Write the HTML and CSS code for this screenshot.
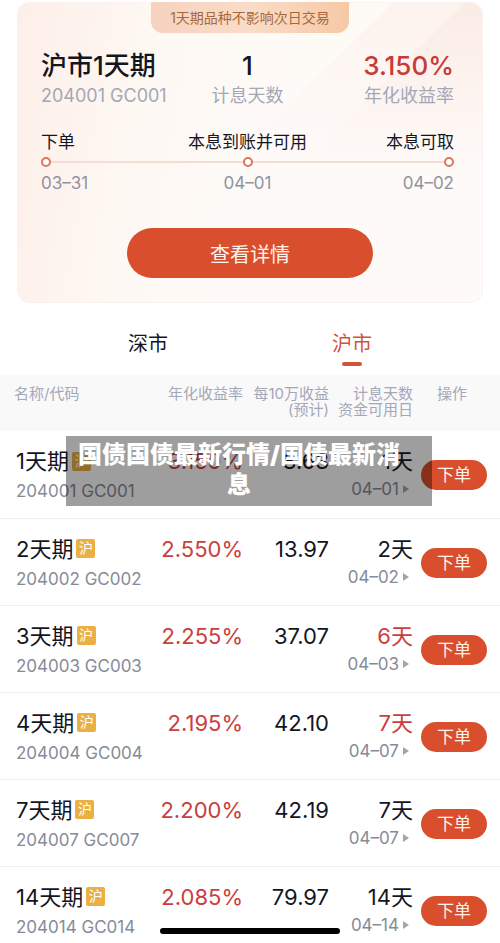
FILE: index.html
```html
<!DOCTYPE html>
<html lang="zh-CN">
<head>
<meta charset="utf-8">
<meta name="viewport" content="width=device-width, initial-scale=1">
<title>国债逆回购</title>
<link rel="stylesheet" href="styles.css">
</head>
<body>
<main class="page">
  <section class="card">
    <p class="card-tag">1天期品种不影响次日交易</p>
    <div class="card-body">
      <div class="summary">
        <div>
          <h1 class="summary-value">沪市1天期</h1>
          <p class="summary-label">204001 GC001</p>
        </div>
        <div class="center">
          <p class="summary-value">1</p>
          <p class="summary-label">计息天数</p>
        </div>
        <div class="right">
          <p class="summary-value accent">3.150%</p>
          <p class="summary-label">年化收益率</p>
        </div>
      </div>
      <div class="steps">
        <span>下单</span><span class="center">本息到账并可用</span><span class="right">本息可取</span>
      </div>
      <div class="track"><i class="dot"></i><i class="bar"></i><i class="dot"></i><i class="bar"></i><i class="dot"></i></div>
      <div class="steps dates">
        <span>03–31</span><span class="center">04–01</span><span class="right">04–02</span>
      </div>
    </div>
    <button class="detail" type="button">查看详情</button>
  </section>

  <nav class="tabs">
    <a class="tab" href="#sz">深市</a>
    <a class="tab active" href="#sh">沪市</a>
  </nav>

  <div class="list">
    <table class="quotes">
      <colgroup><col><col class="col-rate"><col class="col-income"><col class="col-days"><col class="col-action"></colgroup>
      <thead>
        <tr><th class="name">名称/代码</th><th>年化收益率</th><th>每10万收益<br>(预计)</th><th>计息天数<br>资金可用日</th><th class="action">操作</th></tr>
      </thead>
      <tbody>
        <tr>
          <td class="name"><div class="main">1天期<span class="badge">沪</span></div><div class="code">204001 GC001</div></td>
          <td class="main rate">3.150%</td><td class="main">8.63</td>
          <td><div class="main">1天</div><div class="date">04–01<i class="arrow"></i></div></td>
          <td class="action"><button class="order" type="button">下单</button></td>
        </tr>
        <tr>
          <td class="name"><div class="main">2天期<span class="badge">沪</span></div><div class="code">204002 GC002</div></td>
          <td class="main rate">2.550%</td><td class="main">13.97</td>
          <td><div class="main">2天</div><div class="date">04–02<i class="arrow"></i></div></td>
          <td class="action"><button class="order" type="button">下单</button></td>
        </tr>
        <tr>
          <td class="name"><div class="main">3天期<span class="badge">沪</span></div><div class="code">204003 GC003</div></td>
          <td class="main rate">2.255%</td><td class="main">37.07</td>
          <td><div class="main rate">6天</div><div class="date">04–03<i class="arrow"></i></div></td>
          <td class="action"><button class="order" type="button">下单</button></td>
        </tr>
        <tr>
          <td class="name"><div class="main">4天期<span class="badge">沪</span></div><div class="code">204004 GC004</div></td>
          <td class="main rate">2.195%</td><td class="main">42.10</td>
          <td><div class="main rate">7天</div><div class="date">04–07<i class="arrow"></i></div></td>
          <td class="action"><button class="order" type="button">下单</button></td>
        </tr>
        <tr>
          <td class="name"><div class="main">7天期<span class="badge">沪</span></div><div class="code">204007 GC007</div></td>
          <td class="main rate">2.200%</td><td class="main">42.19</td>
          <td><div class="main">7天</div><div class="date">04–07<i class="arrow"></i></div></td>
          <td class="action"><button class="order" type="button">下单</button></td>
        </tr>
        <tr>
          <td class="name"><div class="main">14天期<span class="badge">沪</span></div><div class="code">204014 GC014</div></td>
          <td class="main rate">2.085%</td><td class="main">79.97</td>
          <td><div class="main">14天</div><div class="date">04–14<i class="arrow"></i></div></td>
          <td class="action"><button class="order" type="button">下单</button></td>
        </tr>
      </tbody>
    </table>
    <p class="caption">国债国债最新行情/国债最新消息</p>
  </div>
</main>
<div class="home-indicator"></div>
</body>
</html>
```
FILE: styles.css
```css
* { box-sizing: border-box; }
body {
  margin: 0;
  background: #fff;
  color: #14161f;
  font-family: Inter, "Noto Sans CJK SC", sans-serif;
}
h1, p { margin: 0; }
button { border: 0; padding: 0; font: inherit; cursor: pointer; }
.page { padding-top: 2px; }
.center { text-align: center; }
.right { text-align: right; }

.card {
  display: flex;
  flex-direction: column;
  align-items: center;
  margin: 0 17px;
  padding-bottom: 25px;
  border-radius: 13px;
  background:
    linear-gradient(100deg, #fdeee9 0, rgba(254, 248, 242, .8) 28%, rgba(255, 251, 248, 0) 55%),
    linear-gradient(180deg, rgba(254, 250, 248, 0) 0, #fefaf8 160px),
    linear-gradient(135deg, #fefaf6 265px, #fdf3ee 267px, #fdf3ee 316px, #fbebe5 318px);
  box-shadow: inset 0 0 0 1px #fbf2ef;
}
.card-tag {
  padding: 0 16px;
  min-width: 198px;
  border-radius: 0 0 12px 12px;
  background: linear-gradient(90deg, #f6d2bf, #f9dcc8 50%, #f6c9a5);
  color: #a9683c;
  font-size: 14px;
  line-height: 31px;
  text-align: center;
}
.card-body { width: 100%; padding: 17px 29px 0 24px; }
.summary, .steps { display: grid; grid-template-columns: 1fr auto 1fr; }
.summary-value { font-size: 26px; font-weight: 500; line-height: 32px; }
.summary-label { color: #a3a8b7; font-size: 18px; line-height: 28px; }
.accent { color: #c93a36; }
.steps { margin-top: 20px; font-size: 17px; line-height: 24px; }
.dates { margin-top: 4px; color: #8f93a0; }
.track { display: flex; align-items: center; margin-top: 3px; }
.dot { width: 10px; height: 10px; border: 2px solid #db765a; border-radius: 50%; background: #fff; }
.bar { flex: 1; height: 2px; background: #f7dcd3; }
.detail {
  width: 246px;
  height: 50px;
  margin-top: 33px;
  border-radius: 25px;
  background: #d94e2c;
  color: #fff3ed;
  font-size: 20px;
}

.tabs { display: grid; grid-template-columns: 1fr 1fr; padding: 26px 46px 9px; }
.tab {
  display: flex;
  flex-direction: column;
  align-items: center;
  gap: 3px;
  color: inherit;
  font-size: 20px;
  line-height: 30px;
  text-decoration: none;
}
.tab::after { content: ""; width: 20px; height: 4px; border-radius: 2px; }
.active { color: #cf5537; }
.active::after { background: #cf5537; }

.list { position: relative; }
.quotes { width: 100%; border-collapse: collapse; table-layout: fixed; }
.col-rate { width: 94px; }
.col-income { width: 86px; }
.col-days { width: 84px; }
.col-action { width: 87px; }
th {
  height: 56px;
  padding: 11px 0 0;
  background: #f9f9fa;
  color: #a3a8b7;
  font-size: 15px;
  font-weight: 400;
  line-height: 16px;
  text-align: right;
  vertical-align: top;
  white-space: nowrap;
}
td { height: 87px; padding: 15px 0 0; text-align: right; vertical-align: top; white-space: nowrap; }
tbody tr { border-bottom: 1px solid #eeeeef; }
tbody tr:last-child { border-bottom: 0; }
tbody tr:last-child td { height: 76px; }
th.name { padding-left: 14px; text-align: left; }
td.name { padding-left: 16px; text-align: left; }
th.action { padding-right: 33px; }
td.action { padding: 29px 13px 0 8px; }
.main { font-size: 22px; line-height: 30px; }
.name .main { display: flex; align-items: center; gap: 3px; }
.rate { color: #cb3e3e; }
.code { color: #868b98; font-size: 17px; line-height: 30px; }
.date { display: flex; align-items: center; justify-content: flex-end; gap: 4px; padding-right: 4px; color: #868b98; font-size: 17px; line-height: 26px; }
.arrow { border-left: 6px solid #a0a5b1; border-top: 4px solid transparent; border-bottom: 4px solid transparent; }
.badge { width: 19px; height: 19px; border-radius: 2px; background: #ebb043; color: #fff; font-size: 14px; line-height: 18px; text-align: center; }
.order { display: block; width: 100%; height: 30px; border-radius: 15px; background: #d94e2c; color: #fff3ed; font-size: 17px; line-height: 28px; }

.caption {
  position: absolute;
  top: 61px;
  left: 66px;
  right: 68px;
  padding: 4px 32px 6px 12px;
  background: rgba(0, 0, 0, .38);
  color: #fff;
  font-size: 24px;
  font-weight: 900;
  line-height: 30px;
  text-align: center;
}
.home-indicator { position: fixed; bottom: 9px; left: 50%; width: 180px; height: 6px; margin-left: -90px; border-radius: 3px; background: #000; }
```
